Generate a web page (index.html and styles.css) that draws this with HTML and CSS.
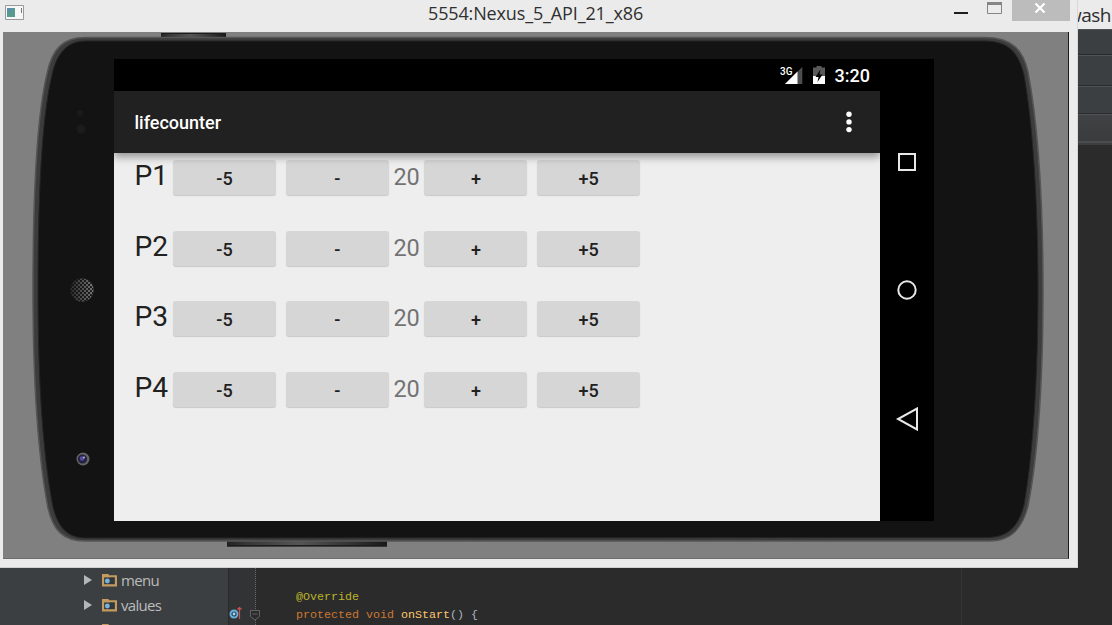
FILE: index.html
```html
<!DOCTYPE html>
<html lang="en">
<head>
<meta charset="utf-8">
<title>5554:Nexus_5_API_21_x86</title>
<link rel="stylesheet" href="styles.css">
</head>
<body>
<div class="desktop">
  <div class="ide">
    <div class="ide-top"><span class="ide-title">wash</span></div>
    <div class="ide-bars"><i class="bar bar-a"></i><i class="bar bar-b"></i><i class="bar bar-c"></i><i class="bar bar-d"></i></div>
    <div class="ide-main">
      <div class="tree">
        <div class="node"><svg class="arrow" viewBox="0 0 8 10"><path d="M0 0 8 5 0 10z"/></svg><svg class="folder" viewBox="0 0 14 12"><path d="M1 2h12v8.500H1z"/><path class="tab" d="M0 0h6l1.500 3H0z"/><circle cx="5" cy="6.500" r="2.300"/></svg><span>menu</span></div>
        <div class="node"><svg class="arrow" viewBox="0 0 8 10"><path d="M0 0 8 5 0 10z"/></svg><svg class="folder" viewBox="0 0 14 12"><path d="M1 2h12v8.500H1z"/><path class="tab" d="M0 0h6l1.500 3H0z"/><circle cx="5" cy="6.500" r="2.300"/></svg><span>values</span></div>
        <div class="node node-last"><svg class="folder" viewBox="0 0 14 12"><path d="M1 2h12v8.500H1z"/><path class="tab" d="M0 0h6l1.500 3H0z"/></svg></div>
      </div>
      <div class="gutter">
        <svg class="override" viewBox="0 0 13 14"><circle cx="5" cy="8" r="4.500" fill="#6ab0d6"/><circle cx="5" cy="8" r="2" fill="#a5d4ec" stroke="#264b5e" stroke-width="1.200"/><path d="M10.500 13V2M8.500 3.500l2-2 2 2" fill="none" stroke="#c75450" stroke-width="1.200"/></svg>
      </div>
      <div class="editor">
        <svg class="fold" viewBox="0 0 10 12"><path d="M.5 1.500h9v6L5 11 .5 7.500zM2.500 5h5" fill="#2b2b2b" stroke="#606366"/></svg>
        <pre class="code"><span class="brace">}</span>

<span class="ann">@Override</span>
<span class="kw">protected void</span> <span class="fn">onStart</span>() {</pre>
      </div>
      <div class="margin-area"></div>
    </div>
  </div>

  <div class="window">
    <div class="titlebar">
      <svg class="app-icon" viewBox="0 0 19 16"><path d="M.5.5h18v14H.5z" fill="#f7f7f7" stroke="#9a9a9a"/><path d="M2 3h8v9H2z" fill="#579a90"/><path d="M2 3h5v3H2z" fill="#5b8eaa"/><path d="M16.500 3v5" stroke="#777"/></svg>
      <span class="title">5554:Nexus_5_API_21_x86</span>
      <div class="controls">
        <svg class="min" viewBox="0 0 14 2"><path d="M0 0h14v2H0z" fill="#1d1d1d"/></svg>
        <svg class="max" viewBox="0 0 15 12"><path d="M.5.5h14v11H.5z" fill="none" stroke="#858585"/><path d="M0 0h15v3H0z" fill="#858585"/></svg>
        <div class="close"><svg viewBox="0 0 12 10"><path d="M1.500.5l9 9M10.500.5l-9 9" stroke="#fff" stroke-width="2.200"/></svg></div>
      </div>
    </div>
    <div class="stage">
      <svg class="phone" viewBox="3 32 1066 527">
        <defs>
          <linearGradient id="key"><stop offset="0" stop-color="#222"/><stop offset=".12" stop-color="#363636"/><stop offset=".45" stop-color="#555"/><stop offset=".85" stop-color="#2b2b2b"/><stop offset="1" stop-color="#181818"/></linearGradient>
          <pattern id="mesh" width="4" height="4" patternUnits="userSpaceOnUse"><circle cx="1" cy="1" r="1.100" fill="#121212"/><circle cx="3" cy="3" r="1.100" fill="#121212"/></pattern>
          <linearGradient id="grille"><stop offset="0" stop-color="#2a2a2a"/><stop offset="1" stop-color="#777"/></linearGradient>
        </defs>
        <path d="M161 33h65v6h-65z" fill="url(#key)"/>
        <path d="M161 33h65v1h-65z" fill="#1c1c1c"/>
        <path d="M227 540h160v6.500H227z" fill="url(#key)"/>
        <path d="M227 545h160v1.500H227z" fill="#1c1c1c"/>
        <path class="rim" d="M85 37.500H985C1012 37.500 1023 50 1028 72C1038 125 1043 205 1043 290C1043 375 1038 455 1028 506C1022 530 1010 541 990 541H85C62 541 53 529 48 508C37 450 33 375 33 290C33 205 36 120 47 74C52 49 63 37.500 85 37.500Z"/>
        <path class="body" d="M86 41H986C1009 42 1018 52 1024 75C1033 125 1038 205 1038 290C1038 375 1033 455 1024 505C1018 527 1008 537 988 537.500L86 538C67 538 58 527 53 507C42 450 38 375 38 290C38 205 41 120 52 75C57 52 68 41 86 41Z"/>
        <circle cx="80" cy="113" r="3" fill="#1b1b1b"/><circle cx="81" cy="129" r="4.500" fill="#1c1c1c"/>
        <circle cx="82" cy="290" r="11.500" fill="url(#grille)"/><circle cx="82" cy="290" r="11.500" fill="url(#mesh)"/>
        <circle cx="83" cy="459" r="6.500" fill="#656565"/><circle cx="82.500" cy="459" r="4.600" fill="#25223f"/><circle cx="82" cy="458.500" r="2.200" fill="#554fa0"/><circle cx="84" cy="457.500" r="1" fill="#b9b7df"/>
      </svg>
      <div class="screen">
        <div class="app">
          <div class="status">
            <svg class="signal" viewBox="0 0 24 20"><path d="M22.300 1v17H5z" fill="#4d4d4d"/><path d="M17.500 5.500V18H5z" fill="#fff"/><text x="0" y="8.500">3G</text></svg>
            <svg class="battery" viewBox="0 0 12 18"><path d="M3.500 0h5v1.500H12V18H0V1.500h3.500z" fill="#5a5a5a"/><path d="M0 10h12v8H0z" fill="#fff"/><path d="M7.500 3.500 2.500 11h3l-1 5 5-7.500h-3z" fill="#000"/></svg>
            <span class="clock">3:20</span>
          </div>
          <div class="actionbar"><span>lifecounter</span><svg class="more" viewBox="0 0 6 22"><circle cx="3" cy="3.200" r="2.700"/><circle cx="3" cy="10.900" r="2.700"/><circle cx="3" cy="18.600" r="2.700"/></svg></div>
          <div class="players">
            <div class="player"><span class="name">P1</span><button>-5</button><button>-</button><span class="life">20</span><button>+</button><button>+5</button></div>
            <div class="player"><span class="name">P2</span><button>-5</button><button>-</button><span class="life">20</span><button>+</button><button>+5</button></div>
            <div class="player"><span class="name">P3</span><button>-5</button><button>-</button><span class="life">20</span><button>+</button><button>+5</button></div>
            <div class="player"><span class="name">P4</span><button>-5</button><button>-</button><span class="life">20</span><button>+</button><button>+5</button></div>
          </div>
        </div>
        <div class="navbar">
          <svg viewBox="0 0 24 24"><path d="M4 4h16v16H4z"/></svg>
          <svg viewBox="0 0 24 24"><circle cx="12" cy="12" r="8.700"/></svg>
          <svg viewBox="0 0 24 24"><path d="M22 1.500v21L3 12z"/></svg>
        </div>
      </div>
    </div>
  </div>
</div>
</body>
</html>
```
FILE: styles.css
```css
* { box-sizing: border-box; }
body { margin: 0; overflow: hidden; }
svg { display: block; flex: none; }
.desktop { position: relative; width: 1112px; height: 625px; overflow: hidden; background: #2b2b2b; }

.ide { display: flex; flex-direction: column; height: 100%; }
.ide-top { height: 29px; background: #ebebeb; text-align: right; overflow: hidden; }
.ide-title { font: 19px/30px "Open Sans", "Noto Sans", sans-serif; letter-spacing: -0.5px; color: #2e2e2e; padding-right: 1px; }
.ide-bars { display: flex; flex-direction: column; height: 539px; }
.bar { height: 29px; background: #3b3f42; border-bottom: 1px solid #292b2c; box-shadow: inset 0 1px #505355; }
.bar-a { height: 26px; }
.bar-b { height: 31px; }
.bar-c { height: 28px; }
.bar-d { height: 32px; background: linear-gradient(#414244, #3a3b3d 27px, #5b5c5d 28px, #3c3d3e 29px); }
.ide-main { display: flex; height: 57px; }
.tree { width: 228px; background: #3c3f41; overflow: hidden; padding-left: 84px; }
.node { display: flex; align-items: center; height: 25px; font: 15px/25px "Open Sans", sans-serif; color: #bbb; }
.node span { margin: -1px 0 0 4px; letter-spacing: -0.7px; }
.arrow { width: 8px; height: 10px; fill: #b4b7b8; margin-top: -2px; }
.folder { width: 15px; height: 13px; margin: -1px 0 0 10px; }
.folder path { fill: #30383e; stroke: #c49a5e; stroke-width: 2; }
.folder .tab { fill: #c49a5e; stroke: none; }
.folder circle { fill: #78b4da; }
.node-last .folder { margin: -1px 0 0 18px; }
.gutter { width: 28px; background: #313335; border-left: 1px solid #292a2b; border-right: 1px dotted #65686a; padding-top: 38px; }
.override { width: 13px; height: 14px; }
.editor { position: relative; width: 705px; padding-left: 40px; }
.fold { position: absolute; left: -6px; top: 41px; width: 10px; height: 12px; }
.code { margin: -14px 0 0; font: 11.67px/17.6px "Liberation Mono", monospace; color: #a9b7c6; }
.brace { position: relative; left: -7px; }
.ann { color: #bbb529; }
.kw { color: #cc7832; }
.fn { color: #ffc66d; }
.margin-area { flex: 1; border-left: 1px solid #353535; }

.window { position: absolute; left: 0; top: 0; width: 1078px; height: 568px; background: #ebebeb; border-right: 1px solid #d8d8d8; border-bottom: 1px solid #d0d0d0; }
.titlebar { display: grid; grid-template-columns: 428px 1fr auto; height: 32px; }
.app-icon { width: 19px; height: 16px; margin: 5px 0 0 5px; }
.title { font: 18px/27px "Open Sans", "Noto Sans", sans-serif; letter-spacing: -0.14px; color: #303030; }
.controls { display: flex; margin-right: 7px; }
.min { width: 14px; height: 2px; margin: 12px 19px 0 0; }
.max { width: 15px; height: 12px; margin: 2px 10px 0 0; }
.close { width: 58px; height: 21px; background: #bcbcbc; padding: 3px 0 0 22px; }
.close svg { width: 12px; height: 10px; }
.stage { position: relative; width: 1066px; height: 527px; margin-left: 3px; padding: 27px 0 0 111px; background: #808080; border-right: 1px solid #1c1c1c; border-bottom: 1px solid #6c6c6c; }
.phone { position: absolute; left: 0; top: 0; width: 1066px; height: 527px; }
.rim { fill: #3c3c3c; stroke: #555; stroke-width: 1.5; }
.body { fill: #131313; stroke: #242424; stroke-width: 1; }

.screen { position: relative; display: grid; grid-template-columns: 766px 54px; width: 820px; height: 462px; font-family: Roboto, sans-serif; }
.app { background: #eee; }
.status { display: flex; height: 32px; background: #000; color: #fff; padding-left: 666px; }
.signal { width: 24px; height: 20px; margin-top: 7px; }
.signal text { font: 500 10px Roboto, sans-serif; fill: #fff; }
.battery { width: 12px; height: 18px; margin: 7px 0 0 9px; }
.clock { font-size: 18px; font-weight: 500; line-height: 34px; margin-left: 9.5px; }
.actionbar { position: relative; display: flex; align-items: center; justify-content: space-between; height: 62px; padding: 0 28px 0 20.5px; background: #212121; color: #fff; font-size: 18px; font-weight: 500; box-shadow: 0 4px 8px rgba(0, 0, 0, .38); clip-path: inset(0 0 -14px 0); }
.more { width: 6px; height: 22px; fill: #fff; }
.players { padding: 7px 0 0 20.5px; }
.player { display: flex; height: 70.6px; }
.name { width: 38.5px; font-size: 28.2px; line-height: 31px; color: #212121; }
.life { width: 26px; margin: 0 5px 0 -5px; font-size: 23.5px; line-height: 35px; color: #737373; }
.player button { width: 103px; height: 35px; margin: 0 9.7px 0 0; padding: 2px 0 0; border: 0; border-radius: 3px; background: #d6d6d6; box-shadow: 0 1px 1px rgba(0, 0, 0, .16); font: 500 18px/33px Roboto, sans-serif; color: #212121; }
.navbar { display: flex; flex-direction: column; align-items: center; gap: 104.5px; padding-top: 90.5px; background: #000; }
.navbar svg { width: 24px; height: 24px; fill: none; stroke: #e8e8e8; stroke-width: 2; }
```
